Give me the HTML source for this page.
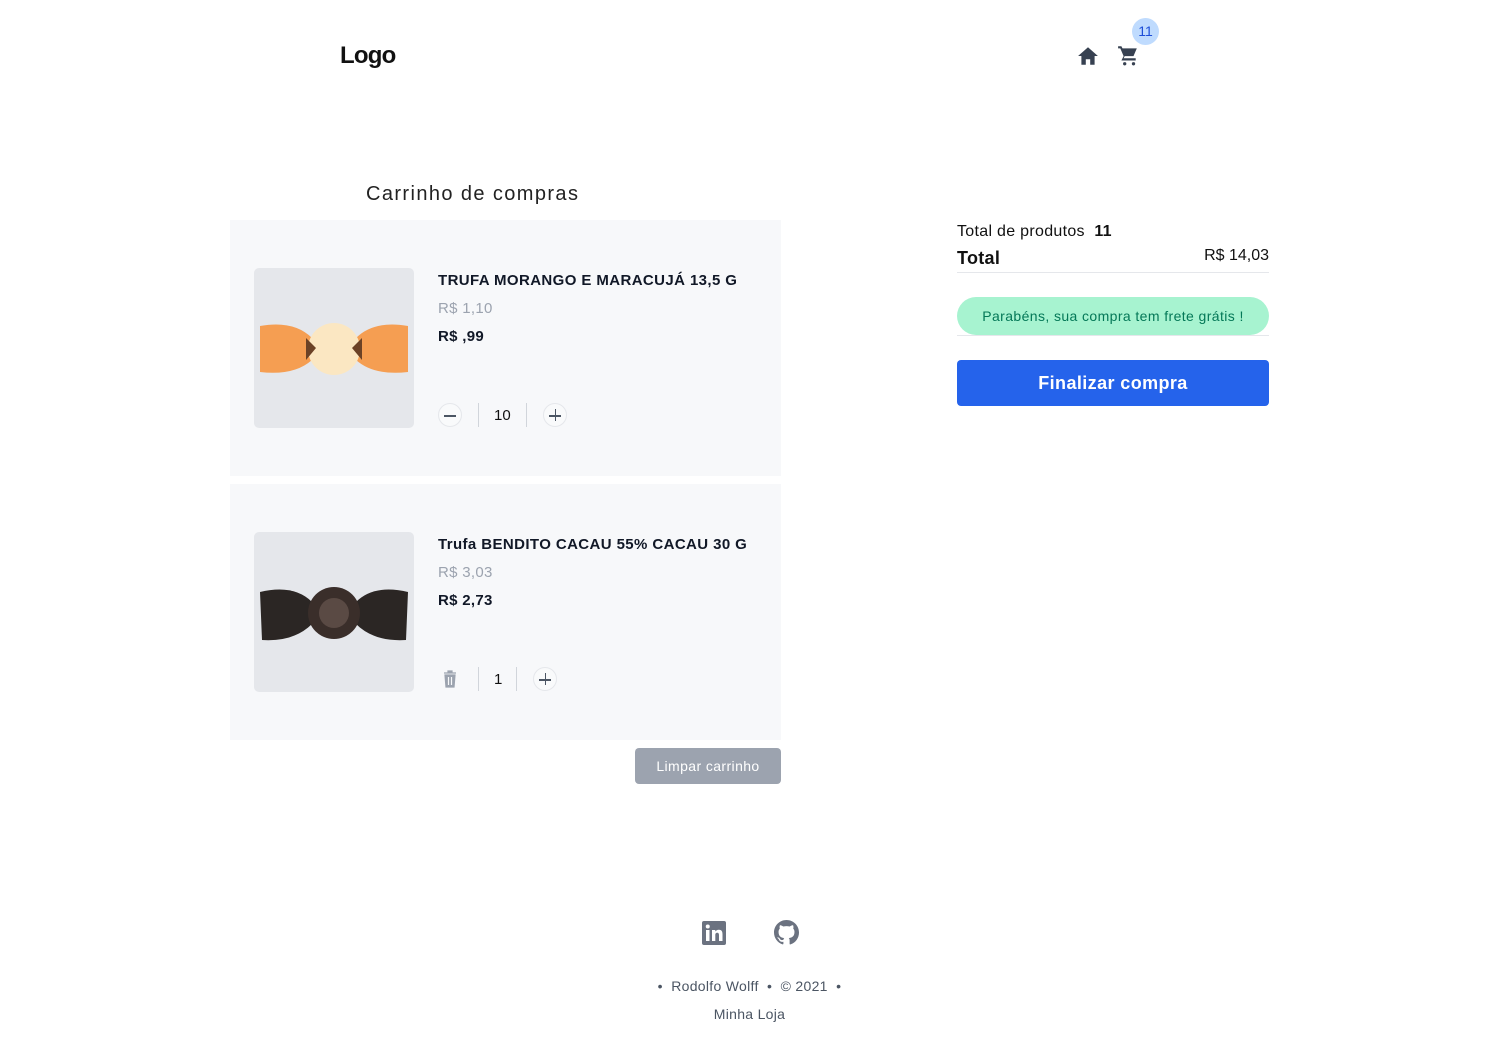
<!DOCTYPE html>
<html><head><meta charset="utf-8"><style>
*{margin:0;padding:0;box-sizing:border-box}
body{width:1499px;height:1056px;background:#fff;font-family:"Liberation Sans",sans-serif;color:#111;position:relative;overflow:hidden}
.a{position:absolute}
.card{position:absolute;left:230px;width:551px;height:256px;background:#f7f8fa}
.img{position:absolute;left:24px;top:48px;width:160px;height:160px;background:#e5e7eb;border-radius:5px;overflow:hidden}
.t{position:absolute;left:208px;font-weight:bold;font-size:15px;color:#111827;letter-spacing:0.4px}
.old{position:absolute;left:208px;font-size:15px;color:#9ca3af;letter-spacing:0.3px}
.new{position:absolute;left:208px;font-weight:bold;font-size:15px;color:#111827;letter-spacing:0.3px}
.btn{position:absolute;width:24px;height:24px;border:1px solid #e5e7eb;border-radius:50%;background:#f9fafb}
.sep{position:absolute;width:1px;height:24px;background:#d1d5db}
.q{position:absolute;font-size:15px}
</style></head><body>
<div class="a" style="left:340px;top:42px;font-weight:bold;font-size:24px;letter-spacing:-0.8px">Logo</div>
<svg class="a" style="left:1077px;top:45px" width="22" height="22" viewBox="0 0 20 20"><path d="M10 2 1 10h3v8h4v-5h4v5h4v-8h3z" fill="#374151"/></svg>
<svg class="a" style="left:1117px;top:44px" width="22" height="22" viewBox="0 0 20 20"><path d="M1 2h3l1 2h13l-3 7H7l-1 2h11v2H4l2-4L3 4H1z" fill="#374151"/><circle cx="7" cy="18" r="1.5" fill="#374151"/><circle cx="15" cy="18" r="1.5" fill="#374151"/></svg>
<div class="a" style="left:1132px;top:18px;width:27px;height:27px;border-radius:50%;background:#bfdbfe;color:#1d4ed8;font-size:14px;text-align:center;line-height:27px">11</div>
<div class="a" style="left:366px;top:183px;font-size:20px;color:#222;letter-spacing:1.4px">Carrinho de compras</div>

<div class="card" style="top:220px">
<div class="img"><svg width="160" height="160" viewBox="0 0 160 160"><path d="M6 58 Q40 52 58 70 L58 92 Q40 108 6 104 Z" fill="#f59e52"/><path d="M154 58 Q120 52 102 70 L102 92 Q120 108 154 104 Z" fill="#f59e52"/><circle cx="80" cy="81" r="26" fill="#fbe7c2"/><path d="M52 70 L62 80 52 92Z M108 70 98 80 108 92Z" fill="#6b4226"/></svg></div>
<div class="t" style="top:52px">TRUFA MORANGO E MARACUJÁ 13,5 G</div>
<div class="old" style="top:80px">R$ 1,10</div>
<div class="new" style="top:108px">R$ ,99</div>
<div class="btn" style="left:208px;top:183px"><div class="a" style="left:5px;top:11px;width:12px;height:1.5px;background:#4b5563"></div></div>
<div class="sep" style="left:248px;top:183px"></div>
<div class="q" style="left:264px;top:187px">10</div>
<div class="sep" style="left:296px;top:183px"></div>
<div class="btn" style="left:313px;top:183px"><div class="a" style="left:5px;top:11px;width:12px;height:1.5px;background:#4b5563"></div><div class="a" style="left:10.5px;top:5px;width:1.5px;height:12px;background:#4b5563"></div></div>
</div>

<div class="card" style="top:484px">
<div class="img"><svg width="160" height="160" viewBox="0 0 160 160"><path d="M6 60 Q40 52 58 70 L58 92 Q40 110 8 108 Z" fill="#2b2624"/><path d="M154 60 Q120 52 102 70 L102 92 Q120 110 152 108 Z" fill="#2b2624"/><circle cx="80" cy="81" r="26" fill="#3a2e2a"/><circle cx="80" cy="81" r="15" fill="#5a4a44"/></svg></div>
<div class="t" style="top:52px">Trufa BENDITO CACAU 55% CACAU 30 G</div>
<div class="old" style="top:80px">R$ 3,03</div>
<div class="new" style="top:108px">R$ 2,73</div>
<svg class="a" style="left:212px;top:186px" width="16" height="18" viewBox="0 0 16 18"><path d="M2 3h12M6 3V1h4v2M3 5h10l-1 12H4z" fill="#9ca3af" stroke="#9ca3af" stroke-width="1.2"/><path d="M6.5 7v8M9.5 7v8" stroke="#f7f8fa" stroke-width="1.2"/></svg>
<div class="sep" style="left:248px;top:183px"></div>
<div class="q" style="left:264px;top:187px">1</div>
<div class="sep" style="left:286px;top:183px"></div>
<div class="btn" style="left:303px;top:183px"><div class="a" style="left:5px;top:11px;width:12px;height:1.5px;background:#4b5563"></div><div class="a" style="left:10.5px;top:5px;width:1.5px;height:12px;background:#4b5563"></div></div>
</div>

<div class="a" style="left:635px;top:748px;width:146px;height:36px;background:#9ca3af;border-radius:4px;color:#fff;font-size:14px;text-align:center;line-height:37px;letter-spacing:0.4px">Limpar carrinho</div>

<div class="a" style="left:957px;top:223px;font-size:16px;letter-spacing:0.3px">Total de produtos &nbsp;<b>11</b></div>
<div class="a" style="left:957px;top:248px;font-size:18px;font-weight:bold;letter-spacing:0.3px">Total</div>
<div class="a" style="left:1150px;top:247px;width:119px;text-align:right;font-size:16px">R$ 14,03</div>
<div class="a" style="left:957px;top:272px;width:312px;height:1px;background:#e5e7eb"></div>
<div class="a" style="left:957px;top:297px;width:312px;height:38px;background:#a7f3d0;border-radius:19px;color:#047857;font-size:14px;text-align:center;line-height:38px;letter-spacing:0.4px">Parabéns, sua compra tem frete grátis !</div>
<div class="a" style="left:957px;top:335px;width:312px;height:1px;background:#e5e7eb"></div>
<div class="a" style="left:957px;top:360px;width:312px;height:46px;background:#2563eb;border-radius:4px;color:#fff;font-size:18px;font-weight:bold;text-align:center;line-height:46px;letter-spacing:0.4px">Finalizar compra</div>

<svg class="a" style="left:702px;top:921px" width="24" height="24" viewBox="0 0 24 24"><rect width="24" height="24" rx="2" fill="#6b7280"/><rect x="4" y="9" width="3.5" height="11" fill="#fff"/><circle cx="5.75" cy="5.5" r="2" fill="#fff"/><path d="M10 9h3.3v1.6c.6-1 1.8-1.9 3.6-1.9 3 0 3.6 2 3.6 4.5V20H17v-5.6c0-1.3-.2-2.6-1.8-2.6s-1.9 1.2-1.9 2.5V20H10z" fill="#fff"/></svg>
<svg class="a" style="left:774px;top:920px" width="25" height="25" viewBox="0 0 16 16"><path fill="#6b7280" d="M8 0C3.58 0 0 3.580 0 8c0 3.54 2.29 6.53 5.47 7.59.4.07.55-.17.55-.38v-1.330c-2.23.48-2.7-1.07-2.7-1.07-.36-.92-.89-1.17-.89-1.17-.73-.5.06-.49.06-.49.8.06 1.23.83 1.23.83.71 1.22 1.87.87 2.33.66.07-.52.28-.87.5-1.07-1.78-.2-3.64-.89-3.64-3.95 0-.87.31-1.59.82-2.15-.08-.2-.36-1.02.08-2.12 0 0 .67-.21 2.2.82a7.6 7.6 0 0 1 4 0c1.53-1.04 2.2-.82 2.2-.82.44 1.1.16 1.92.08 2.12.51.56.82 1.27.82 2.15 0 3.07-1.87 3.75-3.65 3.95.29.25.54.73.54 1.48v2.2c0 .21.15.46.55.38A8 8 0 0 0 16 8c0-4.42-3.58-8-8-8z"/></svg>
<div class="a" style="left:0;top:978px;width:1499px;text-align:center;font-size:14px;color:#4b5563;letter-spacing:0.3px">•&nbsp; Rodolfo Wolff &nbsp;•&nbsp; © 2021 &nbsp;•</div>
<div class="a" style="left:0;top:1006px;width:1499px;text-align:center;font-size:14px;color:#4b5563;letter-spacing:0.3px">Minha Loja</div>
</body></html>
